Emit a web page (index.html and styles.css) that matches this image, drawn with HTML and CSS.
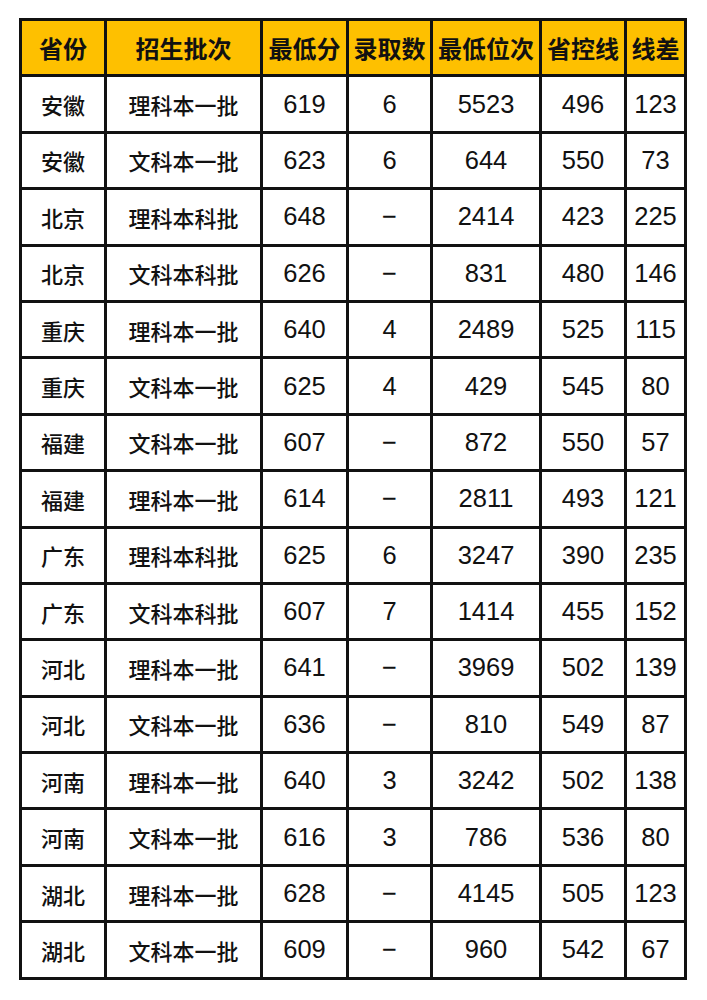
FILE: index.html
```html
<!DOCTYPE html>
<html lang="zh">
<head>
<meta charset="utf-8">
<link rel="stylesheet" href="styles.css">
</head>
<body>
<div class="table">
  <div class="cell head">省份</div><div class="cell head">招生批次</div><div class="cell head">最低分</div><div class="cell head">录取数</div><div class="cell head">最低位次</div><div class="cell head">省控线</div><div class="cell head">线差</div>

  <div class="cell zh">安徽</div><div class="cell zh">理科本一批</div><div class="cell num">619</div><div class="cell num">6</div><div class="cell num">5523</div><div class="cell num">496</div><div class="cell num">123</div>
  <div class="cell zh">安徽</div><div class="cell zh">文科本一批</div><div class="cell num">623</div><div class="cell num">6</div><div class="cell num">644</div><div class="cell num">550</div><div class="cell num">73</div>
  <div class="cell zh">北京</div><div class="cell zh">理科本科批</div><div class="cell num">648</div><div class="cell num">−</div><div class="cell num">2414</div><div class="cell num">423</div><div class="cell num">225</div>
  <div class="cell zh">北京</div><div class="cell zh">文科本科批</div><div class="cell num">626</div><div class="cell num">−</div><div class="cell num">831</div><div class="cell num">480</div><div class="cell num">146</div>
  <div class="cell zh">重庆</div><div class="cell zh">理科本一批</div><div class="cell num">640</div><div class="cell num">4</div><div class="cell num">2489</div><div class="cell num">525</div><div class="cell num">115</div>
  <div class="cell zh">重庆</div><div class="cell zh">文科本一批</div><div class="cell num">625</div><div class="cell num">4</div><div class="cell num">429</div><div class="cell num">545</div><div class="cell num">80</div>
  <div class="cell zh">福建</div><div class="cell zh">文科本一批</div><div class="cell num">607</div><div class="cell num">−</div><div class="cell num">872</div><div class="cell num">550</div><div class="cell num">57</div>
  <div class="cell zh">福建</div><div class="cell zh">理科本一批</div><div class="cell num">614</div><div class="cell num">−</div><div class="cell num">2811</div><div class="cell num">493</div><div class="cell num">121</div>
  <div class="cell zh">广东</div><div class="cell zh">理科本科批</div><div class="cell num">625</div><div class="cell num">6</div><div class="cell num">3247</div><div class="cell num">390</div><div class="cell num">235</div>
  <div class="cell zh">广东</div><div class="cell zh">文科本科批</div><div class="cell num">607</div><div class="cell num">7</div><div class="cell num">1414</div><div class="cell num">455</div><div class="cell num">152</div>
  <div class="cell zh">河北</div><div class="cell zh">理科本一批</div><div class="cell num">641</div><div class="cell num">−</div><div class="cell num">3969</div><div class="cell num">502</div><div class="cell num">139</div>
  <div class="cell zh">河北</div><div class="cell zh">文科本一批</div><div class="cell num">636</div><div class="cell num">−</div><div class="cell num">810</div><div class="cell num">549</div><div class="cell num">87</div>
  <div class="cell zh">河南</div><div class="cell zh">理科本一批</div><div class="cell num">640</div><div class="cell num">3</div><div class="cell num">3242</div><div class="cell num">502</div><div class="cell num">138</div>
  <div class="cell zh">河南</div><div class="cell zh">文科本一批</div><div class="cell num">616</div><div class="cell num">3</div><div class="cell num">786</div><div class="cell num">536</div><div class="cell num">80</div>
  <div class="cell zh">湖北</div><div class="cell zh">理科本一批</div><div class="cell num">628</div><div class="cell num">−</div><div class="cell num">4145</div><div class="cell num">505</div><div class="cell num">123</div>
  <div class="cell zh">湖北</div><div class="cell zh">文科本一批</div><div class="cell num">609</div><div class="cell num">−</div><div class="cell num">960</div><div class="cell num">542</div><div class="cell num">67</div>
</div>
</body>
</html>
```
FILE: styles.css
```css
html, body {
  margin: 0;
  padding: 0;
  background: #ffffff;
}
body {
  padding: 18px 0 0 19px;
}
.table {
  display: grid;
  grid-template-columns: 82px 153px 83px 81px 106px 82px 57px;
  grid-auto-rows: 53.4px;
  gap: 3px;
  padding: 3px;
  background: #111111;
  width: max-content;
}
.cell {
  background: #ffffff;
  display: flex;
  align-items: center;
  justify-content: center;
  color: #111111;
  white-space: nowrap;
}
.head {
  background: #fec000;
  font-family: "Noto Sans CJK SC", sans-serif;
  font-weight: 700;
  font-size: 24px;
  letter-spacing: 0;
}
.zh {
  font-family: "Noto Sans CJK SC", sans-serif;
  font-weight: 500;
  font-size: 22px;
}
.num {
  font-family: "Liberation Sans", Arial, sans-serif;
  font-size: 25.5px;
}
```
